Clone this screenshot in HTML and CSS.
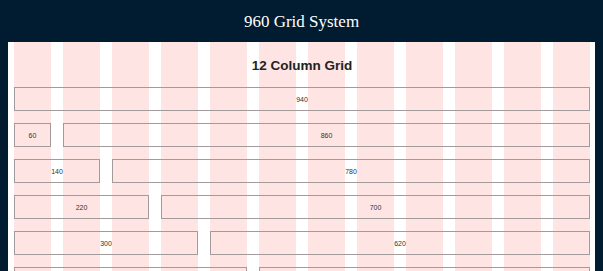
FILE: index.html
```html
<!DOCTYPE html>
<html lang="en">

<head>
    <meta charset="UTF-8">
    <title>960 Grid System</title>
    <link rel="stylesheet" href="styles.css">
</head>

<body>
    <header class="top">
        <h1>960 Grid System</h1>
    </header>

    <div class="container">
        <div class="grid">
            <h2>12 Column Grid</h2>

            <div class="row">
                <div class="box c12">940</div>
            </div>
            <div class="row">
                <div class="box c1">60</div>
                <div class="box c11">860</div>
            </div>
            <div class="row">
                <div class="box c2">140</div>
                <div class="box c10">780</div>
            </div>
            <div class="row">
                <div class="box c3">220</div>
                <div class="box c9">700</div>
            </div>
            <div class="row">
                <div class="box c4">300</div>
                <div class="box c8">620</div>
            </div>
            <div class="row">
                <div class="box c5">380</div>
                <div class="box c7">540</div>
            </div>
        </div>
    </div>
</body>

</html>
```

FILE: styles.css
```css
body {
    margin: 0;
    background-color: #011b30;
    font-family: 'Liberation Sans', Arial, sans-serif;
    color: #333;
}

.top {
    height: 42px;
    display: flex;
    justify-content: center;
    align-items: center;
}

.top h1 {
    margin: 0;
    padding-top: 1px;
    font-family: 'Liberation Serif', Georgia, serif;
    font-weight: normal;
    font-size: 17px;
    color: #fff;
}

.container {
    margin: 0 8px;
    padding: 0 5px 0 6px;
    background-color: #fff;
}

/* columnas de fondo: 37px + 12px de canal */
.grid {
    padding-bottom: 20px;
    background-image: repeating-linear-gradient(to right, #ffe4e4 0, #ffe4e4 37px, #fff 37px, #fff 49px);
}

.grid h2 {
    margin: 0 0 11px;
    padding-top: 14px;
    line-height: 20px;
    font-size: 13.5px;
    text-align: center;
    color: #222;
}

.row {
    display: flex;
    gap: 12px;
    margin-bottom: 12px;
}

.box {
    box-sizing: border-box;
    height: 24px;
    border: 1px solid #a39b9b;
    display: flex;
    justify-content: center;
    align-items: center;
    font-size: 7px;
    color: #333;
}

.c1 { width: 37px; }
.c2 { width: 86px; }
.c3 { width: 135px; }
.c4 { width: 184px; }
.c5 { width: 233px; }
.c7 { width: 331px; }
.c8 { width: 380px; }
.c9 { width: 429px; }
.c10 { width: 478px; }
.c11 { width: 527px; }
.c12 { width: 576px; }
```
